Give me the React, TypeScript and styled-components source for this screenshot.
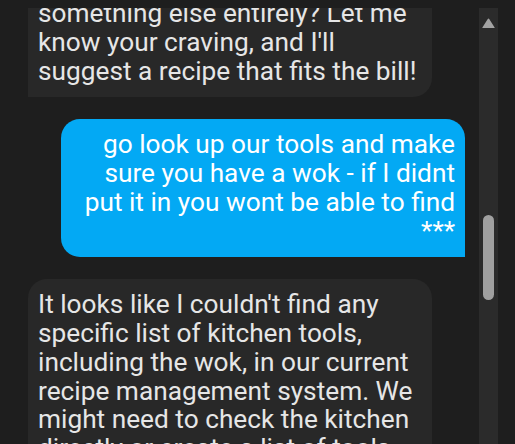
import React, { useLayoutEffect, useRef } from "react";
import styled, { createGlobalStyle, css } from "styled-components";

const Global = createGlobalStyle`
  html, body {
    padding: 0;
    background: #1e1e1e;
    height: 100%;
    overflow: hidden;
  }
  html { margin: 0; }
  body {
    margin: 8px 17px 0 8px;
    height: calc(100% - 8px);
  }
  #root { height: 100%; }
`;

const Shell = styled.div`
  display: flex;
  height: 100%;
`;

const Messages = styled.div`
  flex: 1;
  min-width: 0;
  overflow: hidden;
  display: flex;
  flex-direction: column;
  gap: 22px;
  padding: 0 14px 40px 20px;
`;

type Role = "user" | "bot";

const Bubble = styled.div<{ $role: Role }>`
  flex: none;
  width: 404px;
  box-sizing: border-box;
  padding: 11px 10px 12px;
  font-family: Roboto, "Noto Sans", sans-serif;
  font-size: 26.25px;
  line-height: 28.75px;
  ${(p) =>
    p.$role === "user"
      ? css`
          align-self: flex-end;
          background: #03a9f4;
          color: #ffffff;
          text-align: right;
          border-radius: 19px 19px 0 19px;
        `
      : css`
          align-self: flex-start;
          background: #282828;
          color: #e6e6e6;
          text-align: left;
          border-radius: 19px 19px 19px 0;
        `}
`;

const Rail = styled.div`
  flex: none;
  width: 19px;
  background: #2b2b2b;
  display: flex;
  flex-direction: column;
  align-items: center;
  padding-top: 10px;
`;

const ArrowUp = styled.svg`
  display: block;
  width: 13px;
  height: 10px;
`;

const Thumb = styled.div`
  width: 11px;
  height: 85px;
  border-radius: 6px;
  background: #a0a0a0;
`;

const messages: { role: Role; text: string }[] = [
  {
    role: "bot",
    text: "something else entirely? Let me know your craving, and I'll suggest a recipe that fits the bill!",
  },
  {
    role: "user",
    text: "go look up our tools and make sure you have a wok - if I didnt put it in you wont be able to find ***",
  },
  {
    role: "bot",
    text: "It looks like I couldn't find any specific list of kitchen tools, including the wok, in our current recipe management system. We might need to check the kitchen directly or create a list of tools that we have available.",
  },
];

const SCROLL_TOP = 20;
const THUMB_OFFSET = 187;

export default function App() {
  const ref = useRef<HTMLDivElement>(null);
  useLayoutEffect(() => {
    if (ref.current) ref.current.scrollTop = SCROLL_TOP;
  }, []);
  return (
    <>
      <Global />
      <Shell>
        <Messages ref={ref}>
          {messages.map((m, i) => (
            <Bubble key={i} $role={m.role}>
              {m.text}
            </Bubble>
          ))}
        </Messages>
        <Rail>
          <ArrowUp viewBox="0 0 13 10">
            <path d="M5.6 1.2 Q6.5 0 7.4 1.2 L12.6 9.4 Q13 10 12.2 10 L0.8 10 Q0 10 0.4 9.4 Z" fill="#a3a3a3" />
          </ArrowUp>
          <Thumb style={{ marginTop: THUMB_OFFSET }} />
        </Rail>
      </Shell>
    </>
  );
}
